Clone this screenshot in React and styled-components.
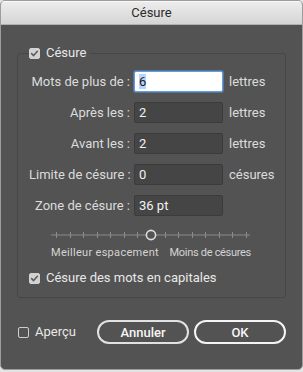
import React from "react";
import styled, { createGlobalStyle } from "styled-components";

const GlobalStyle = createGlobalStyle`
  html, body {
    margin: 0;
    padding: 0;
    background: #e4e4e4;
  }
  body {
    font-family: Roboto, "Liberation Sans", sans-serif;
  }
`;

const Window = styled.div`
  box-sizing: border-box;
  width: 303px;
  height: 370px;
  border: 1px solid #9d9d9d;
  border-radius: 5px;
  overflow: hidden;
  background: #535353;
  display: flex;
  flex-direction: column;
`;

const TitleBar = styled.div`
  flex: none;
  height: 23px;
  background: linear-gradient(#ededed, #d5d5d5);
  border-bottom: 1px solid #b1b1b1;
  box-shadow: inset 0 1px 0 #f8f8f8;
  display: flex;
  align-items: center;
  justify-content: center;
  font-size: 13px;
  color: #2b2b2b;
`;

const Body = styled.div`
  padding: 0 16px;
  display: flex;
  flex-direction: column;
`;

const Group = styled.fieldset`
  margin: 20px 0 0;
  padding: 10px 11px 11px;
  border: 1px solid #474747;
  border-radius: 3px;
  min-width: 0;
`;

const Legend = styled.legend`
  padding: 0 4px 0 0;
  line-height: 16px;
  display: flex;
  align-items: center;
  gap: 6px;
  font-size: 13px;
  color: #e8e8e8;
`;

const Box = styled.span`
  box-sizing: border-box;
  flex: none;
  width: 11px;
  height: 11px;
  border-radius: 2px;
  display: inline-flex;
  align-items: center;
  justify-content: center;
  background: ${(p) => (p.$checked ? "#d2d2d2" : "transparent")};
  border: 1px solid ${(p) => (p.$checked ? "#d2d2d2" : "#cfcfcf")};
`;

const Form = styled.div`
  display: grid;
  grid-template-columns: 105px 89px 1fr;
  grid-auto-rows: 21px;
  row-gap: 10px;
  align-items: center;
`;

const Label = styled.span`
  text-align: right;
  padding-right: 4px;
  font-size: 13px;
  color: #dcdcdc;
  white-space: nowrap;
`;

const Field = styled.div`
  box-sizing: border-box;
  height: 21px;
  display: flex;
  align-items: center;
  padding-left: 4px;
  border-radius: 2px;
  font-size: 13px;
  background: ${(p) => (p.$focused ? "#ffffff" : "#454545")};
  border: 1px solid ${(p) => (p.$focused ? "#5f9de8" : "#3b3b3b")};
  box-shadow: ${(p) =>
    p.$focused ? "0 0 0 1px rgba(95, 157, 232, 0.45)" : "none"};
  color: ${(p) => (p.$focused ? "#1d1d1d" : "#f2f2f2")};
`;

const Selected = styled.span`
  background: #b5d5fb;
`;

const Unit = styled.span`
  padding-left: 6px;
  font-size: 13px;
  color: #dcdcdc;
`;

const SliderWrap = styled.div`
  margin: 10px 0 0 22px;
  width: 200px;
`;

const SliderLabels = styled.div`
  margin-top: 1px;
  display: flex;
  justify-content: space-between;
  font-size: 11px;
  line-height: 13px;
  color: #d4d4d4;
`;

const SliderLabel = styled.span`
  letter-spacing: ${(p) => (p.$wide ? "0.3px" : "-0.3px")};
`;

const CheckRow = styled.label`
  display: flex;
  align-items: center;
  gap: 6px;
  line-height: 16px;
  font-size: 13px;
  color: #e8e8e8;
  margin-top: ${(p) => p.$top || 0}px;
`;

const Footer = styled.div`
  margin-top: 22px;
  height: 24px;
  display: flex;
  align-items: center;
  padding-left: 1px;
`;

const Buttons = styled.div`
  margin-left: auto;
  display: flex;
  gap: 5px;
`;

const Button = styled.button`
  box-sizing: border-box;
  width: 92px;
  height: 24px;
  border-radius: 12px;
  border: 2px solid ${(p) => (p.$primary ? "#f4f4f4" : "#e2e2e2")};
  background: transparent;
  color: #f6f6f6;
  font-family: Roboto, "Liberation Sans", sans-serif;
  font-size: 13px;
  font-weight: 500;
  padding: 0;
`;

function Check({ checked }) {
  return (
    <Box $checked={checked}>
      {checked && (
        <svg width="9" height="9" viewBox="0 0 9 9">
          <path
            d="M1.6 4.6 L3.6 6.6 L7.4 2.2"
            fill="none"
            stroke="#5a5a5a"
            strokeWidth="1.5"
            strokeLinecap="round"
            strokeLinejoin="round"
          />
        </svg>
      )}
    </Box>
  );
}

function Slider() {
  const step = 190 / 14;
  const marks = Array.from({ length: 15 }, (_, i) => 5 + i * step);
  return (
    <svg width="200" height="12" viewBox="0 0 200 12">
      <line x1="0" y1="6" x2={marks[7] - 5} y2="6" stroke="#8c8c8c" />
      <line x1={marks[7] + 5} y1="6" x2="199" y2="6" stroke="#8c8c8c" />
      {marks.map((x, i) =>
        i === 7 ? null : (
          <line
            key={i}
            x1={Math.round(x) + 0.5}
            y1="3"
            x2={Math.round(x) + 0.5}
            y2="9"
            stroke="#8c8c8c"
          />
        )
      )}
      <circle
        cx={marks[7]}
        cy="6"
        r="4.6"
        fill="#535353"
        stroke="#dcdcdc"
        strokeWidth="1.6"
      />
    </svg>
  );
}

const rows = [
  { label: "Mots de plus de :", value: "6", unit: "lettres", focused: true },
  { label: "Après les :", value: "2", unit: "lettres" },
  { label: "Avant les :", value: "2", unit: "lettres" },
  { label: "Limite de césure :", value: "0", unit: "césures" },
  { label: "Zone de césure :", value: "36 pt" },
];

export default function App() {
  return (
    <>
      <GlobalStyle />
      <Window>
        <TitleBar>Césure</TitleBar>
        <Body>
          <Group>
            <Legend>
              <Check checked />
              Césure
            </Legend>
            <Form>
              {rows.map((row) => (
                <React.Fragment key={row.label}>
                  <Label>{row.label}</Label>
                  <Field $focused={row.focused}>
                    {row.focused ? <Selected>{row.value}</Selected> : row.value}
                  </Field>
                  <Unit>{row.unit}</Unit>
                </React.Fragment>
              ))}
            </Form>
            <SliderWrap>
              <Slider />
              <SliderLabels>
                <SliderLabel $wide>Meilleur espacement</SliderLabel>
                <SliderLabel>Moins de césures</SliderLabel>
              </SliderLabels>
            </SliderWrap>
            <CheckRow $top={11}>
              <Check checked />
              Césure des mots en capitales
            </CheckRow>
          </Group>
          <Footer>
            <CheckRow>
              <Check />
              Aperçu
            </CheckRow>
            <Buttons>
              <Button>Annuler</Button>
              <Button $primary>OK</Button>
            </Buttons>
          </Footer>
        </Body>
      </Window>
    </>
  );
}
